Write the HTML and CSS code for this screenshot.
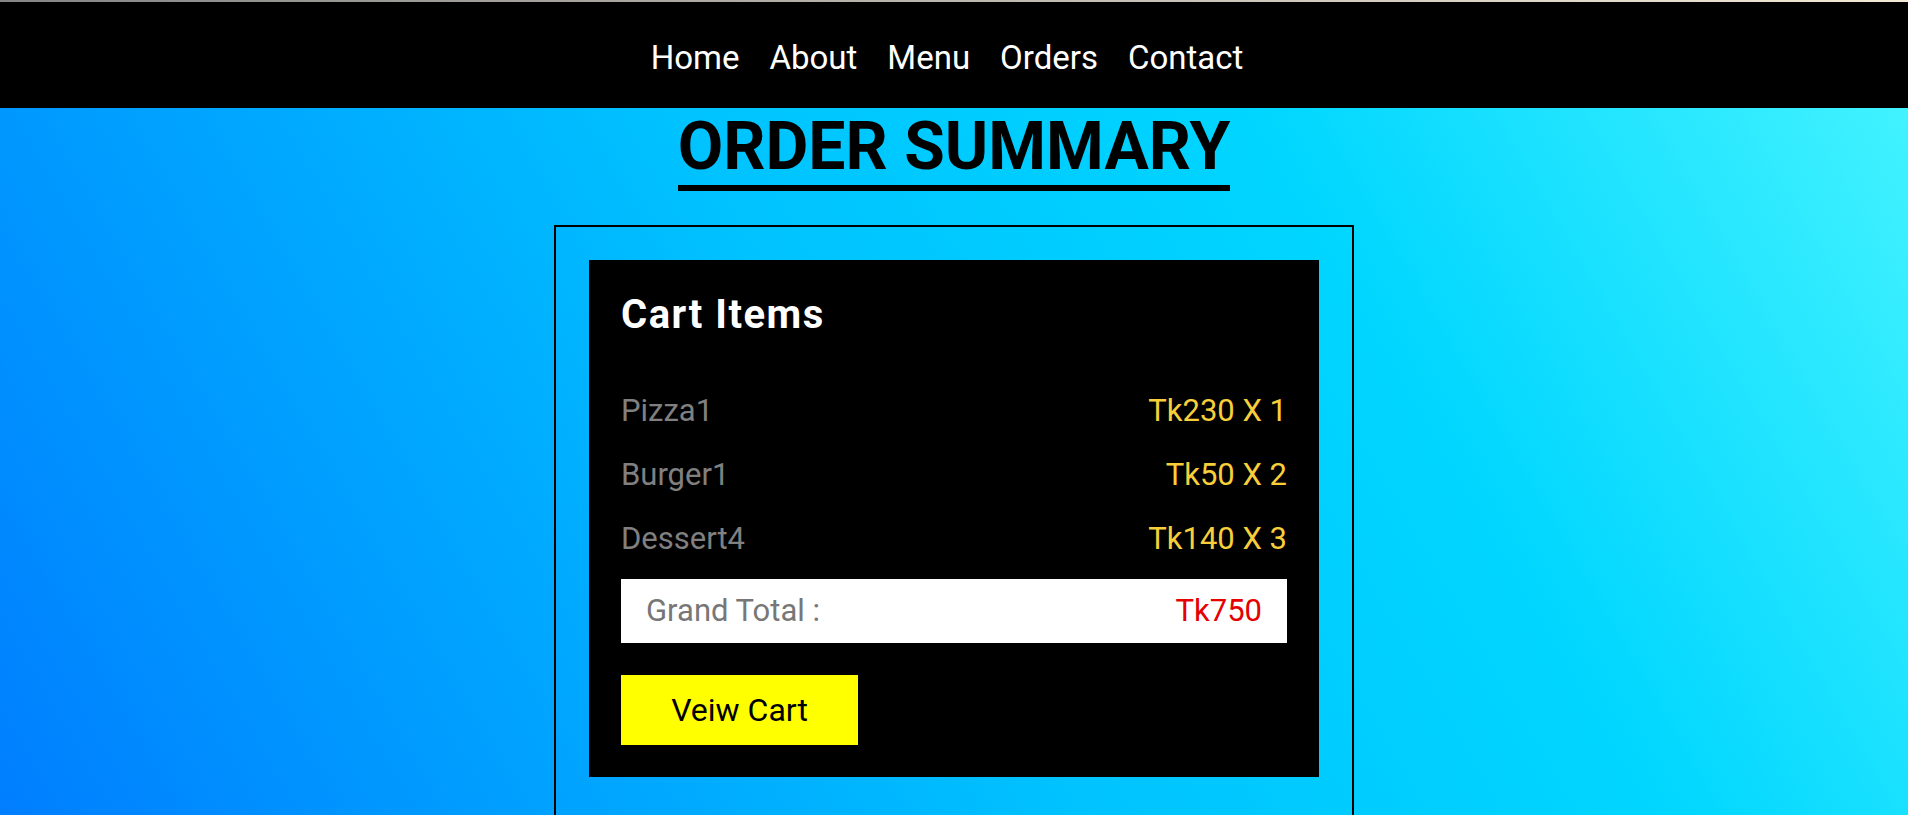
FILE: index.html
```html
<!DOCTYPE html>
<html lang="en">

<head>
  <meta charset="UTF-8">
  <meta name="viewport" content="width=device-width, initial-scale=1">
  <title>Order Summary</title>
  <link rel="stylesheet" href="styles.css">
</head>

<body>
  <div class="topline"></div>
  <header class="navbar">
    <nav class="nav-links">
      <a href="#">Home</a>
      <a href="#">About</a>
      <a href="#">Menu</a>
      <a href="#">Orders</a>
      <a href="#">Contact</a>
    </nav>
  </header>

  <main class="page">
    <h1 class="title">ORDER SUMMARY</h1>
    <section class="summary">
      <div class="cart">
        <h2>Cart Items</h2>
        <ul class="items">
          <li><span class="name">Pizza1</span><span class="price">Tk230 X 1</span></li>
          <li><span class="name">Burger1</span><span class="price">Tk50 X 2</span></li>
          <li><span class="name">Dessert4</span><span class="price">Tk140 X 3</span></li>
        </ul>
        <div class="total">
          <span>Grand Total :</span>
          <span class="amount">Tk750</span>
        </div>
        <button class="view-btn" type="button">Veiw Cart</button>
      </div>
    </section>
  </main>
</body>

</html>
```

FILE: styles.css
```css
* {
  box-sizing: border-box;
}

html {
  overflow-y: scroll;
}

::-webkit-scrollbar {
  width: 3px;
}

::-webkit-scrollbar-track {
  background: #f0fbff;
}

::-webkit-scrollbar-thumb {
  background: #ffff00;
}

body {
  margin: 0;
  font-family: Roboto, "Liberation Sans", sans-serif;
  background: linear-gradient(60deg, #007eff 0%, #00c2ff 45%, #00d6ff 70%, #48f5ff 100%) fixed;
}

.topline {
  height: 2px;
  background: linear-gradient(to right, #858585, #f3e9d6);
}

.navbar {
  background-color: #000;
  padding: 38px 14px 32px 0;
}

.nav-links {
  display: flex;
  justify-content: center;
  gap: 30px;
  line-height: 36px;
}

.nav-links a {
  color: #fff;
  font-size: 33px;
  text-decoration: none;
}

.page {
  display: flex;
  flex-direction: column;
  align-items: center;
}

.title {
  margin: 1px 0 34px 0;
  font-size: 66px;
  font-weight: 700;
  line-height: 1.15;
  color: #000;
  border-bottom: 6px solid #000;
}

.summary {
  width: 800px;
  min-height: 2170px;
  border: 2px solid #000;
  padding: 33px;
}

.cart {
  background-color: #000;
  padding: 33px 32px 32px 32px;
}

.cart h2 {
  margin: 0 0 42px 0;
  font-size: 40px;
  line-height: 44px;
  font-weight: 700;
  letter-spacing: 1.5px;
  color: #fff;
}

.items {
  list-style: none;
  margin: 0;
  padding: 0;
}

.items li {
  display: flex;
  justify-content: space-between;
  padding: 14px 0;
  font-size: 31px;
  line-height: 36px;
}

.items .name {
  color: #808080;
}

.items .price {
  color: #f8cf3a;
}

.total {
  display: flex;
  justify-content: space-between;
  margin-top: 8px;
  padding: 0 25px;
  background-color: #fff;
  font-size: 31px;
  line-height: 64px;
  color: #777;
}

.total .amount {
  color: #e60000;
}

.view-btn {
  display: block;
  margin-top: 32px;
  width: 237px;
  height: 70px;
  border: none;
  background-color: #ffff00;
  font-family: Roboto, "Liberation Sans", sans-serif;
  font-size: 32px;
  color: #000;
  cursor: pointer;
}
```
